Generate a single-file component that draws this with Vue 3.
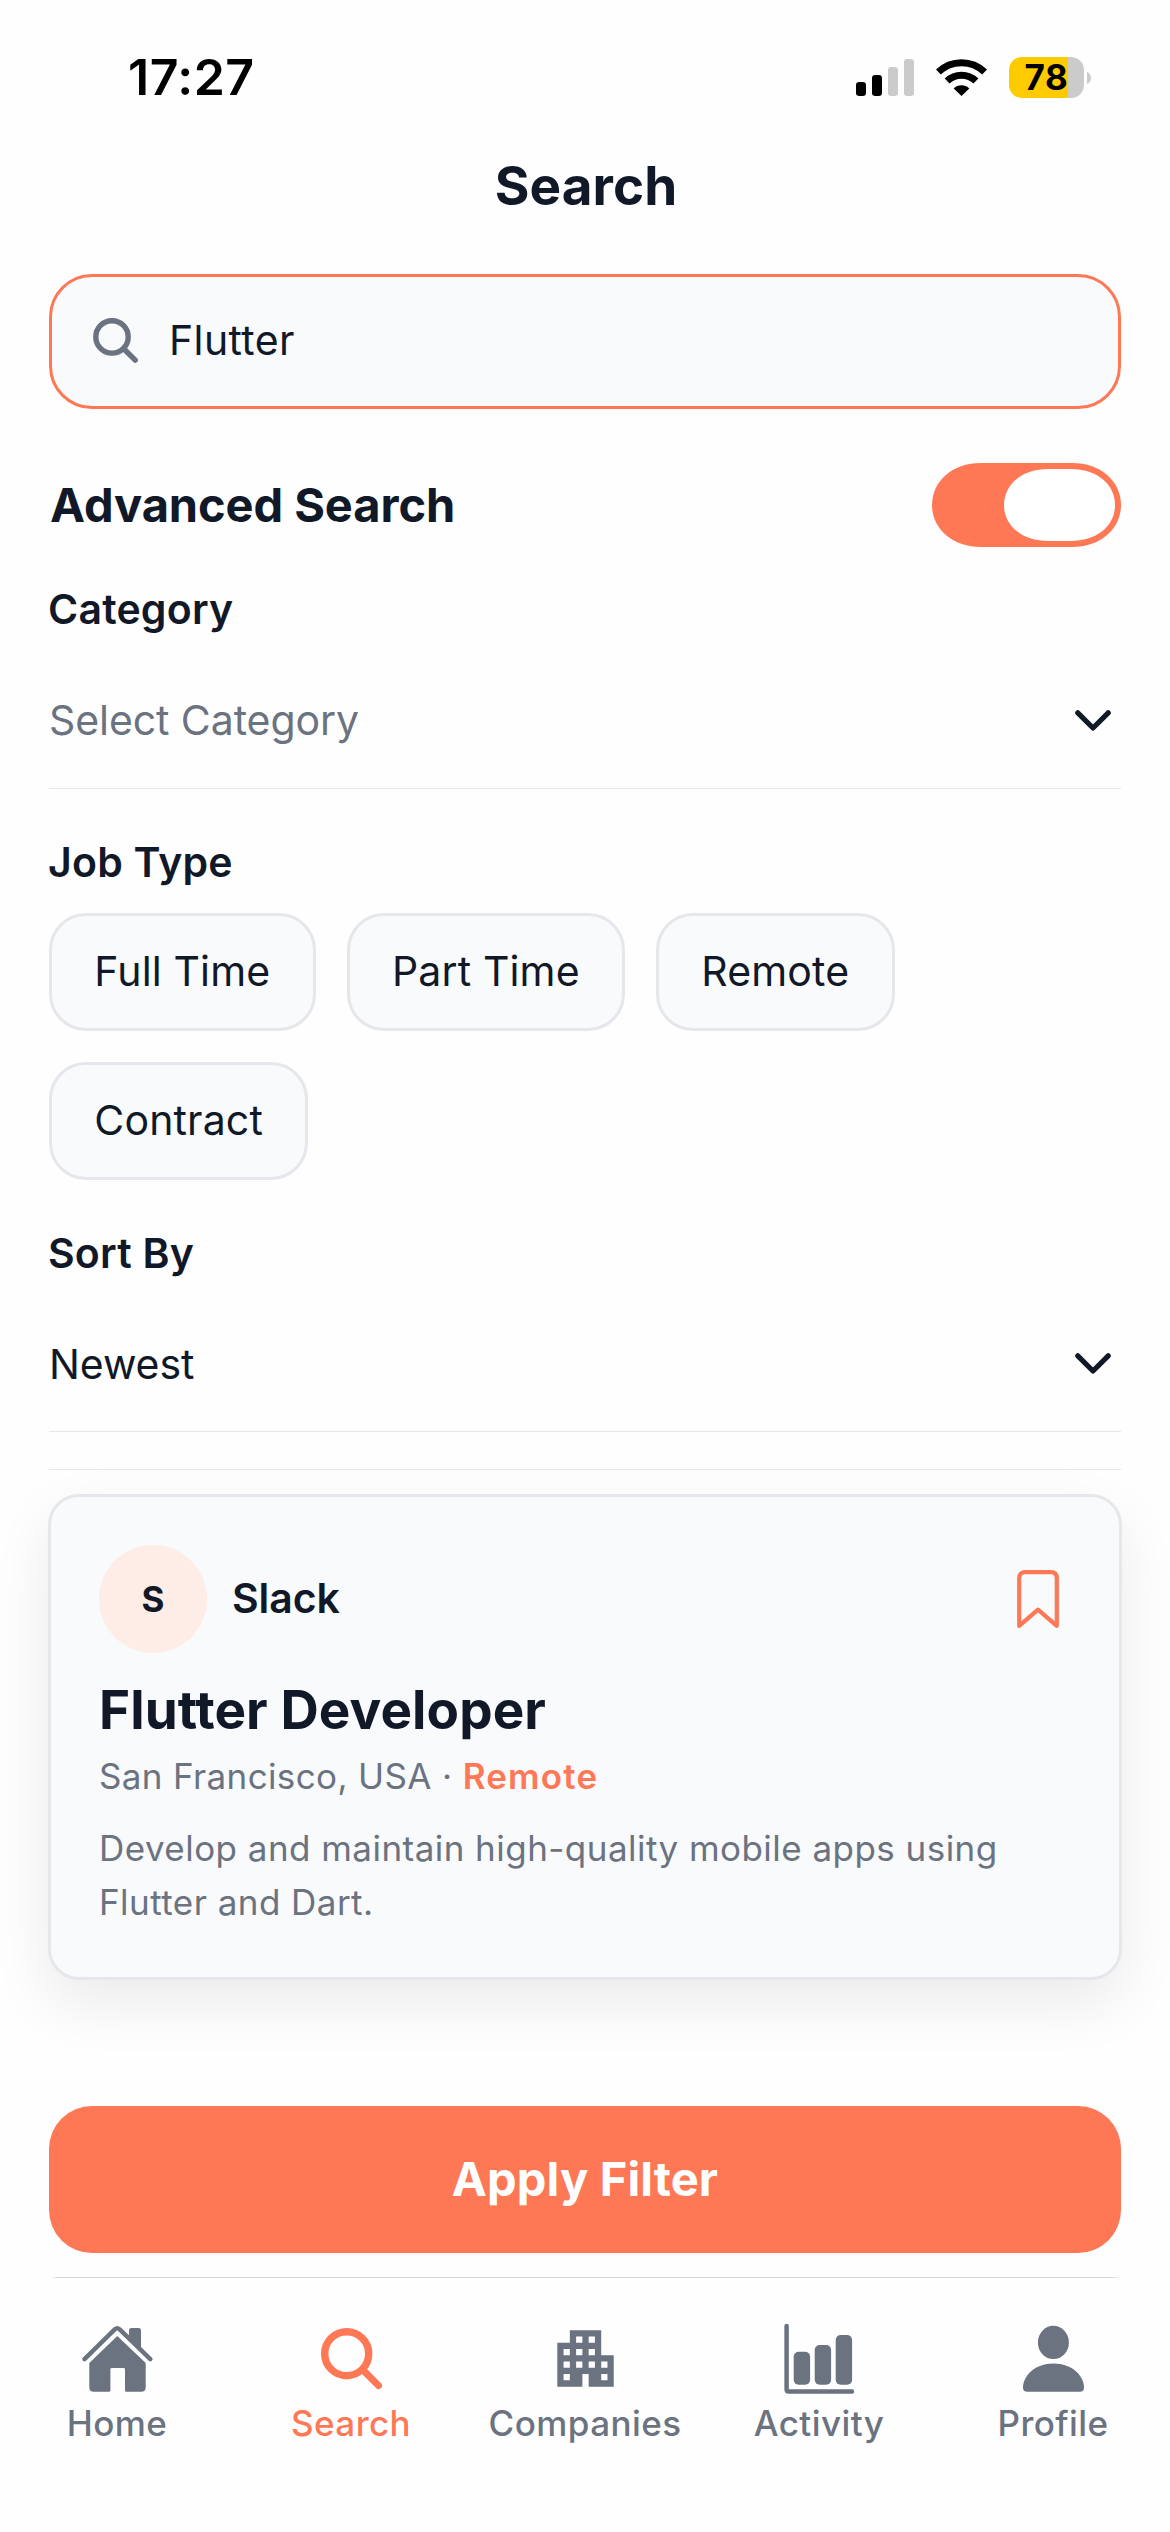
<script setup>
import { ref } from 'vue'

const query = ref('Flutter')
const jobTypes = ['Full Time', 'Part Time', 'Remote', 'Contract']
const tabs = [
  { id: 'home', label: 'Home' },
  { id: 'search', label: 'Search' },
  { id: 'companies', label: 'Companies' },
  { id: 'activity', label: 'Activity' },
  { id: 'profile', label: 'Profile' }
]
const activeTab = ref('search')

// window cells of the building icon, on a 9 x 9 grid
const windows = [
  [3, 1], [5, 1],
  [1, 3], [3, 3], [5, 3],
  [1, 5], [3, 5], [5, 5], [7, 5],
  [1, 7], [7, 7]
]
const buildingPath =
  'M0 2H2V0H7V4H9V9H5V7H4V9H0Z' +
  windows.map(([x, y]) => `M${x} ${y}v1h1v-1z`).join('')
</script>

<template>
  <div class="screen">
    <div class="status">
      <span class="time">17:27</span>
      <div class="indicators">
        <svg width="58" height="37" viewBox="0 0 58 37">
          <rect x="0" y="23" width="10" height="14" rx="3.2" fill="#000" />
          <rect x="16" y="16" width="10" height="21" rx="3.2" fill="#000" />
          <rect x="32" y="8" width="10" height="29" rx="3.2" fill="#cbcbcb" />
          <rect x="48" y="0" width="10" height="37" rx="3.2" fill="#cbcbcb" />
        </svg>
        <svg width="51" height="37" viewBox="0 0 51 37">
          <g fill="none" stroke="#000" stroke-width="7">
            <path d="M2.4 13.1A33.3 33.3 0 0 1 48.6 13.1" />
            <path d="M11.1 22A20.8 20.8 0 0 1 39.9 22" />
          </g>
          <path d="M25.5 37L17.7 29.4A11 11 0 0 1 33.3 29.4Z" fill="#000" />
        </svg>
        <div class="battery">
          <div class="cell"><span>78</span></div>
          <svg width="4" height="12" viewBox="0 0 4 12">
            <path d="M0 0C2.6 1 4 3.4 4 6S2.6 11 0 12Z" fill="#cbcbcb" />
          </svg>
        </div>
      </div>
    </div>

    <h1 class="page-title">Search</h1>

    <main class="content">
      <div class="search-box">
        <svg width="45" height="45" viewBox="0 0 45 45" fill="none" stroke="#6b7280" stroke-width="5.4" stroke-linecap="round">
          <circle cx="19" cy="18.9" r="16.2" />
          <path d="M31 31L42.2 42.2" />
        </svg>
        <span class="query">{{ query }}</span>
      </div>

      <div class="advanced">
        <h2>Advanced Search</h2>
        <svg width="189" height="84" viewBox="0 0 189 84">
          <path fill="#fe7856" d="M140 0C169 0 189 18.5 189 42S169 84 140 84H49C20 84 0 65.5 0 42S20 0 49 0Z" />
          <path fill="#fff" d="M138 6C166 6 183 22 183 42S166 78 138 78H117C89 78 72 62 72 42S89 6 117 6Z" />
        </svg>
      </div>

      <h3 class="label category">Category</h3>
      <div class="select placeholder">
        <span>Select Category</span>
        <svg class="chevron" width="36" height="21" viewBox="0 0 36 21">
          <path d="M2.8 2.8L18 18L33.2 2.8" />
        </svg>
      </div>

      <h3 class="label">Job Type</h3>
      <div class="chips">
        <button v-for="type in jobTypes" :key="type" class="chip">{{ type }}</button>
      </div>

      <h3 class="label">Sort By</h3>
      <div class="select sort">
        <span>Newest</span>
        <svg class="chevron" width="36" height="21" viewBox="0 0 36 21">
          <path d="M2.8 2.8L18 18L33.2 2.8" />
        </svg>
      </div>

      <div class="divider"></div>

      <article class="card">
        <div class="company">
          <div class="avatar">S</div>
          <span class="name">Slack</span>
          <svg width="42" height="58" viewBox="0 0 42 58">
            <path d="M2.2 55.8V8.2Q2.2 2.2 8.2 2.2H33.8Q39.8 2.2 39.8 8.2V55.8L21 39.6Z" fill="none" stroke="#fe7856" stroke-width="4.2" stroke-linejoin="round" />
          </svg>
        </div>
        <h2 class="job-title">Flutter Developer</h2>
        <p class="place">San Francisco, USA · <b>Remote</b></p>
        <p class="summary">Develop and maintain high-quality mobile apps using Flutter and Dart.</p>
      </article>

      <button class="apply">Apply Filter</button>
    </main>

    <div class="tab-line"></div>
    <nav class="tabs">
      <a v-for="tab in tabs" :key="tab.id" class="tab" :class="{ active: tab.id === activeTab }">
        <svg width="72" height="72" viewBox="0 0 72 72" fill="currentColor">
          <g v-if="tab.id === 'home'">
            <path d="M3.5 36.1L34 6.2Q36.2 4.2 38.4 6.2L69.3 36.1" fill="none" stroke="currentColor" stroke-width="4.4" stroke-linecap="round" />
            <path d="M48 16V7.4Q48 5 50.4 5H57.6Q60 5 60 7.4V27Z" />
            <path d="M36.3 13L64.7 40V64.2Q64.7 68.7 60.2 68.7H45.5Q44 68.7 44 67.2V46.4Q44 45 42.6 45H30.8Q29.4 45 29.4 46.4V67.2Q29.4 68.7 27.9 68.7H12.8Q8.3 68.7 8.3 64.2V40Z" />
          </g>
          <g v-else-if="tab.id === 'search'" fill="none" stroke="currentColor" stroke-linecap="round">
            <circle cx="31.7" cy="30.7" r="22" stroke-width="7.4" />
            <path d="M48 47L63.5 62.6" stroke-width="7" />
          </g>
          <path v-else-if="tab.id === 'companies'" transform="translate(8.3 7.2) scale(6.27)" fill-rule="evenodd" :d="buildingPath" />
          <g v-else-if="tab.id === 'activity'">
            <path d="M3.6 3V66.4Q3.6 68.4 5.6 68.4H69" fill="none" stroke="currentColor" stroke-width="4.5" stroke-linecap="round" />
            <rect x="10.7" y="28.7" width="16.4" height="33" rx="5" />
            <rect x="31.7" y="22" width="16.4" height="39.7" rx="5" />
            <rect x="52.7" y="12" width="16.4" height="49.7" rx="5" />
          </g>
          <g v-else>
            <ellipse cx="36.4" cy="19.4" rx="15.5" ry="16.6" />
            <path d="M6 64.4C6 53 17.5 40.4 36.5 40.4S67 53 67 64.4Q67 68.7 62.7 68.7H10.3Q6 68.7 6 64.4Z" />
          </g>
        </svg>
        <span>{{ tab.label }}</span>
      </a>
    </nav>
  </div>
</template>

<style>
body {
  background: #fefefe;
}
</style>

<style scoped>
.screen {
  display: flex;
  flex-direction: column;
  width: 1170px;
  height: 2532px;
  overflow: hidden;
  background: #fefefe;
  color: #111827;
  font-family: Inter, 'Liberation Sans', sans-serif;
  font-size: 41px;
}
h1, h2, h3, p {
  margin: 0;
}
svg {
  display: block;
  flex: none;
}
button {
  font: inherit;
  color: inherit;
}

.status {
  display: flex;
  align-items: center;
  justify-content: space-between;
  height: 155px;
  padding: 0 79px 0 128px;
}
.time {
  color: #000;
  font-size: 50px;
  font-weight: 600;
  line-height: 51px;
  letter-spacing: 0.5px;
}
.indicators {
  display: flex;
  align-items: center;
  gap: 22px;
}
.battery {
  display: flex;
  align-items: center;
  gap: 3px;
}
.cell {
  display: flex;
  align-items: center;
  justify-content: center;
  width: 75px;
  height: 41px;
  border-radius: 13px;
  background: linear-gradient(90deg, #fecb00 59px, #cbcbcb 59px);
  color: #000;
  font-size: 35px;
  font-weight: 700;
  line-height: 41px;
  letter-spacing: 0.8px;
}

.page-title {
  font-size: 53px;
  font-weight: 700;
  line-height: 62px;
  letter-spacing: 0.1px;
  text-indent: 2px;
  text-align: center;
}

.content {
  display: flex;
  flex-direction: column;
  padding: 57px 49px 0;
}
.search-box {
  display: flex;
  align-items: center;
  gap: 31px;
  box-sizing: border-box;
  height: 135px;
  padding: 0 41px 2px;
  border: 3px solid #fe7856;
  border-radius: 43px;
  background: #f9fafc;
}
.query {
  padding-bottom: 2px;
  line-height: 48px;
  letter-spacing: 0.38px;
}

.advanced {
  display: flex;
  align-items: center;
  justify-content: space-between;
  margin-top: 54px;
  padding-left: 1px;
}
.advanced h2 {
  font-size: 47px;
  font-weight: 700;
  line-height: 56px;
  letter-spacing: -0.07px;
}

.label {
  margin: 48px 0 0 -1px;
  font-size: 41px;
  font-weight: 600;
  line-height: 50px;
  letter-spacing: 0.2px;
}
.label.category {
  margin-top: 37px;
}
.select {
  display: flex;
  align-items: center;
  justify-content: space-between;
  height: 135px;
  margin-top: 19px;
  padding-right: 10.5px;
  border-bottom: 1px solid #e5e7eb;
  letter-spacing: -0.08px;
}
.select.sort {
  margin-top: 18px;
}
.placeholder span {
  padding-bottom: 2px;
  color: #6b7280;
}
.chevron {
  fill: none;
  stroke: #111827;
  stroke-width: 5.2;
  stroke-linecap: round;
  stroke-linejoin: round;
}

.chips {
  display: flex;
  flex-wrap: wrap;
  gap: 31px;
  margin-top: 26px;
}
.chip {
  box-sizing: border-box;
  height: 118px;
  padding: 0 42.3px 3px;
  border: 3px solid #e5e7eb;
  border-radius: 37px;
  background: #f9fafc;
  letter-spacing: 0.15px;
}

.divider {
  height: 1px;
  margin-top: 37px;
  background: #e5e7eb;
}

.card {
  box-sizing: border-box;
  height: 486px;
  margin: 24px -1px 0;
  padding: 48px 60px 0 48px;
  border: 3px solid #e5e7eb;
  border-radius: 31px;
  background: #f9fafc;
  box-shadow: 0 24px 60px rgba(0, 0, 0, 0.08);
}
.company {
  display: flex;
  align-items: center;
}
.avatar {
  display: flex;
  align-items: center;
  justify-content: center;
  width: 108px;
  height: 108px;
  border-radius: 50%;
  background: #feede6;
  font-size: 35px;
  font-weight: 700;
  line-height: 42px;
}
.name {
  flex: 1;
  margin-left: 25px;
  padding-bottom: 2px;
  font-weight: 600;
  line-height: 48px;
  letter-spacing: -0.1px;
}
.job-title {
  margin: 25px 0 0;
  font-size: 53px;
  font-weight: 700;
  line-height: 64px;
  letter-spacing: 0.1px;
}
.place {
  margin-top: 12px;
  color: #6b7280;
  font-size: 35px;
  line-height: 44px;
  letter-spacing: 0.36px;
}
.place b {
  color: #fe7856;
  font-weight: 600;
  letter-spacing: 1.2px;
}
.summary {
  margin-top: 23px;
  color: #6b7280;
  font-size: 35px;
  line-height: 54px;
  letter-spacing: 0.46px;
}

.apply {
  height: 147px;
  margin-top: 126px;
  padding: 0 0 2px;
  border: 0;
  border-radius: 43px;
  background: #fe7856;
  color: #fff;
  font-size: 47px;
  font-weight: 700;
  letter-spacing: 0.14px;
}

.tab-line {
  height: 1px;
  margin: 24px 51px 0;
  background: linear-gradient(90deg, transparent, #d8d8d8 6px, #d8d8d8 calc(100% - 6px), transparent);
}
.tabs {
  display: grid;
  grid-template-columns: repeat(5, 1fr);
  padding-top: 45px;
}
.tab {
  display: flex;
  flex-direction: column;
  align-items: center;
  gap: 6px;
  color: #6b7280;
  font-size: 35px;
  font-weight: 500;
  line-height: 44px;
  letter-spacing: 0.42px;
}
.tab.active {
  color: #fe7856;
}
</style>
